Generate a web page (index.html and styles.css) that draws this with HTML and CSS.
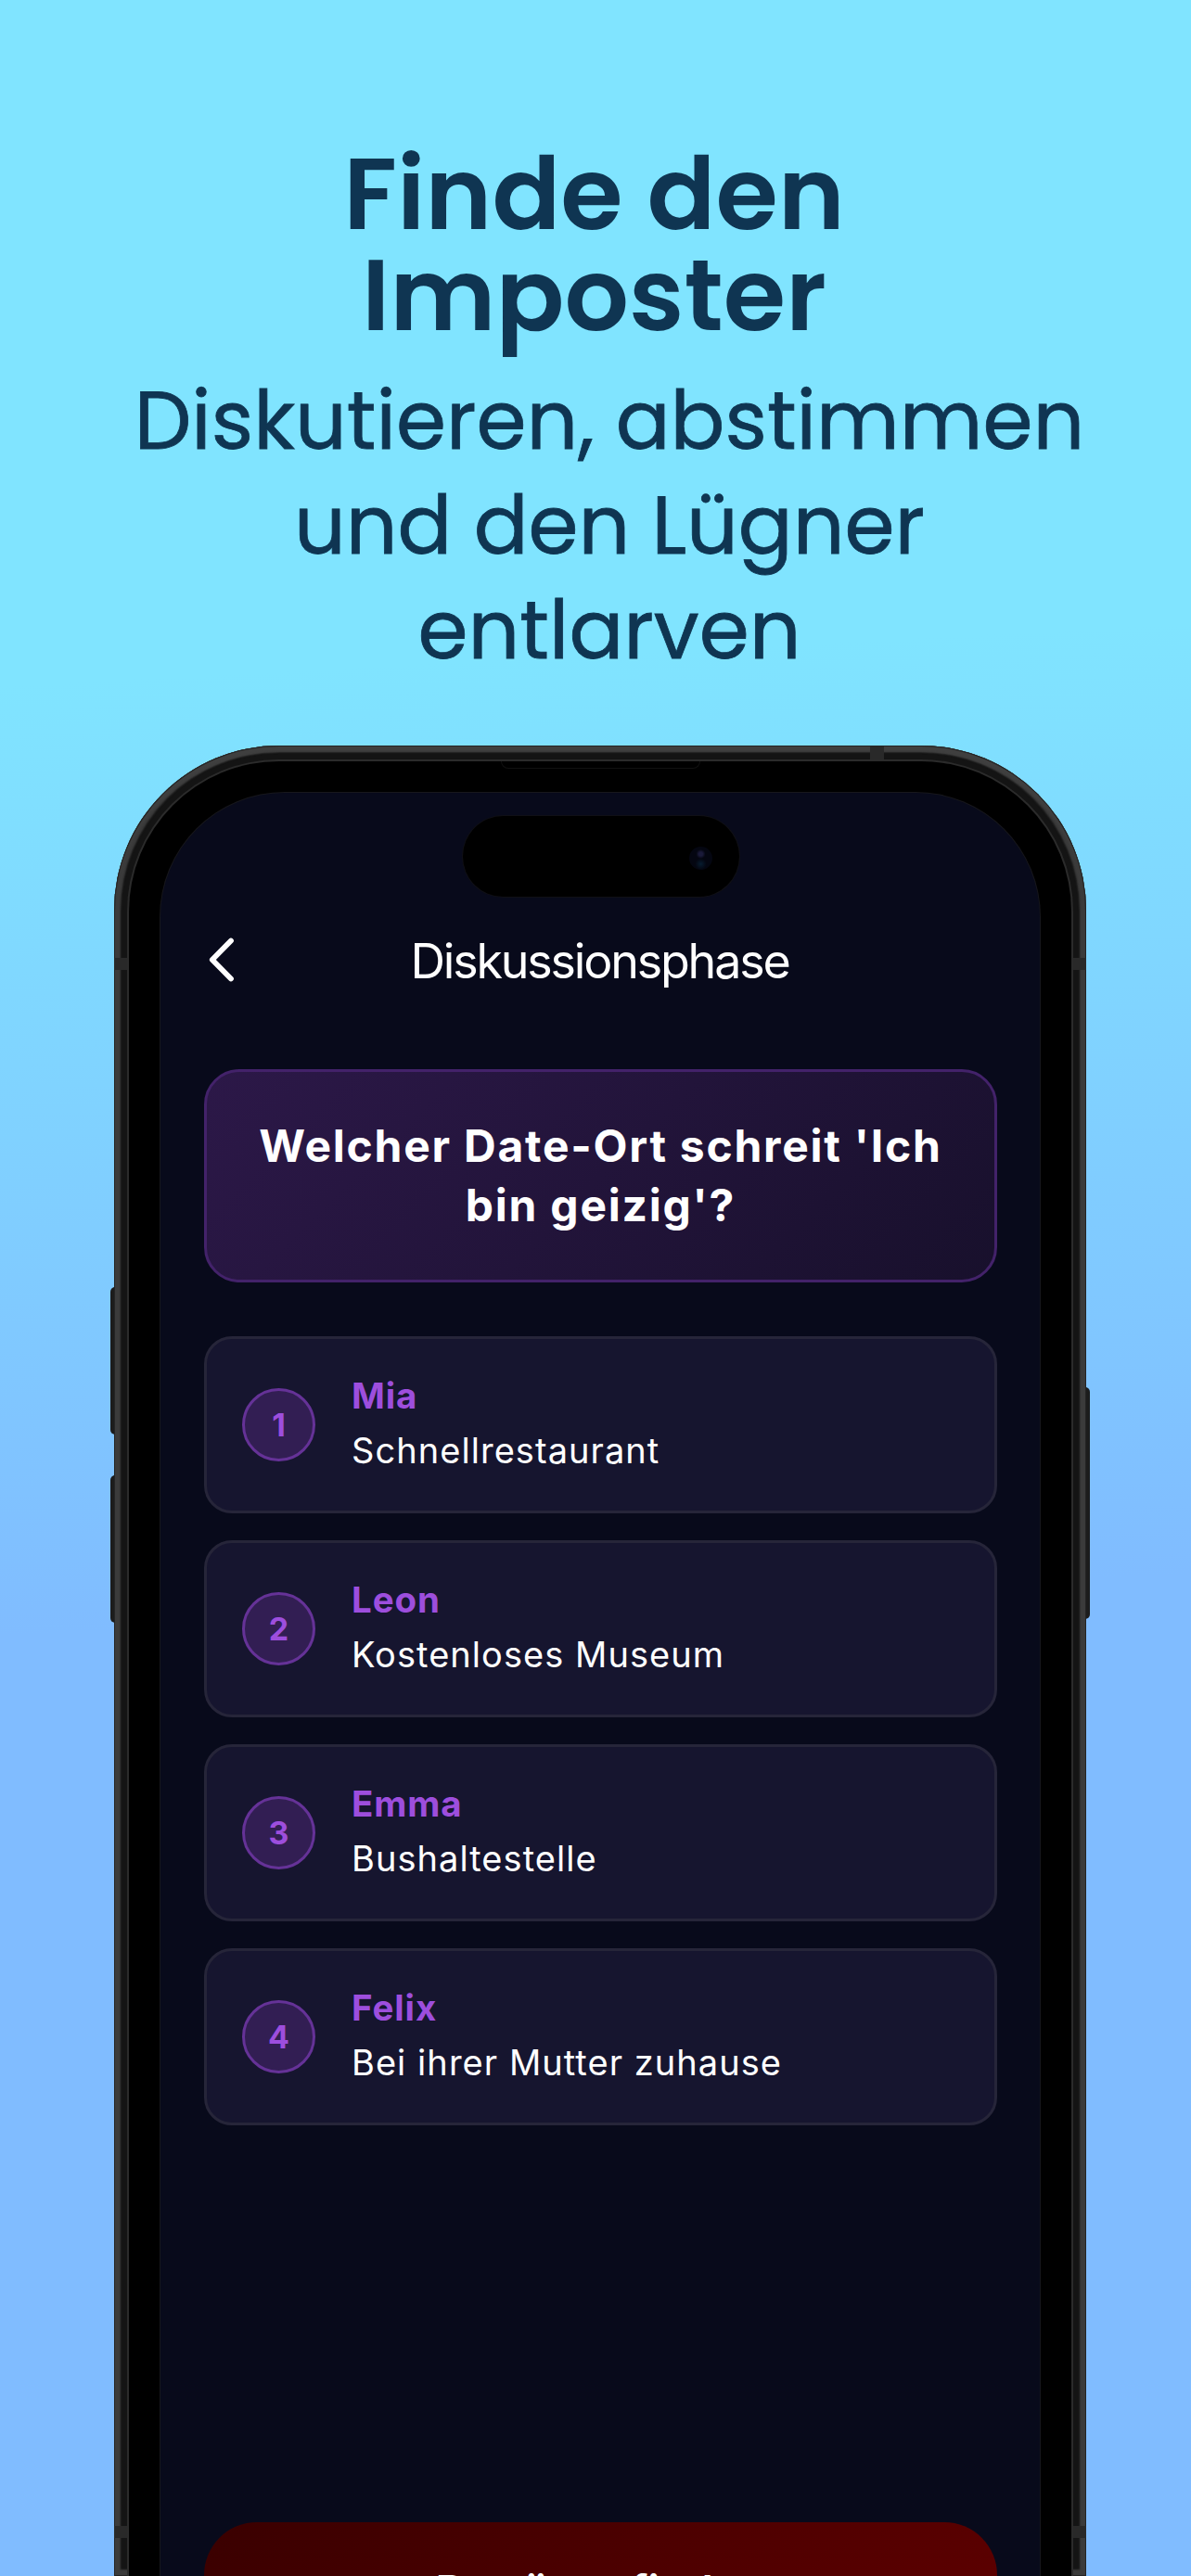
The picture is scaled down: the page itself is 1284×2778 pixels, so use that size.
FILE: index.html
```html
<!DOCTYPE html>
<html lang="de">
<head>
  <meta charset="UTF-8">
  <meta name="viewport" content="width=device-width, initial-scale=1.0">
  <title>Finde den Imposter</title>
  <link rel="stylesheet" href="styles.css">
</head>
<body>

  <header class="promo">
    <h1>
      <span>Finde den</span>
      <span>Imposter</span>
    </h1>
    <p>
      <span>Diskutieren, abstimmen</span>
      <span>und den Lügner</span>
      <span>entlarven</span>
    </p>
  </header>

  <div class="phone">
    <div class="side-button vol-up"></div>
    <div class="side-button vol-down"></div>
    <div class="side-button power"></div>
    <div class="antenna antenna-top"></div>
    <div class="antenna antenna-side"></div>
    <div class="antenna antenna-bottom"></div>

    <div class="bezel">
      <div class="speaker"></div>
      <div class="screen">
        <div class="island"><div class="camera"></div></div>

        <div class="topbar">
          <svg class="back" width="34" height="54" viewBox="0 0 34 54">
            <path d="M29 6.5 L8.8 27 L29 47.5" fill="none" stroke="#fff" stroke-width="5.8" stroke-linecap="round" stroke-linejoin="round"/>
          </svg>
          <div class="title">Diskussionsphase</div>
        </div>

        <div class="question">
          <span>Welcher Date-Ort schreit 'Ich</span>
          <span>bin geizig'?</span>
        </div>

        <div class="answers">
          <div class="answer">
            <div class="number">1</div>
            <div>
              <div class="name">Mia</div>
              <div class="text">Schnellrestaurant</div>
            </div>
          </div>
          <div class="answer">
            <div class="number">2</div>
            <div>
              <div class="name">Leon</div>
              <div class="text">Kostenloses Museum</div>
            </div>
          </div>
          <div class="answer">
            <div class="number">3</div>
            <div>
              <div class="name">Emma</div>
              <div class="text">Bushaltestelle</div>
            </div>
          </div>
          <div class="answer">
            <div class="number">4</div>
            <div>
              <div class="name">Felix</div>
              <div class="text">Bei ihrer Mutter zuhause</div>
            </div>
          </div>
        </div>

        <button class="vote">Betrüger finden</button>
      </div>
    </div>
  </div>

</body>
</html>
```

FILE: styles.css
```css
* {
  box-sizing: border-box;
}
body {
  margin: 0;
  width: 1284px;
  height: 2778px;
  overflow: hidden;
  font-family: Inter, sans-serif;
  background: linear-gradient(177deg, #80e4ff 0%, #80e4ff 26%, #80bcff 62%, #80bcff 100%);
}
.promo {
  height: 804px;
  padding-top: 155px;
  color: #0f3552;
  text-align: center;
  font-family: Poppins, Inter, sans-serif;
}
.promo span {
  display: block;
  white-space: nowrap;
}
h1 {
  margin: 0;
  padding-right: 3px;
  font-size: 109px;
  font-weight: 600;
  line-height: 109px;
}
.promo p {
  margin: 24px 0 0;
  padding-left: 30px;
  font-size: 87.1px;
  line-height: 113px;
  -webkit-text-stroke: 0.8px #0f3552;
}

/* phone */
.phone {
  position: relative;
  width: 1048px;
  height: 1974px;
  margin-left: 123px;
  padding: 17px 16px 0;
  border-radius: 178px 178px 0 0;
  background: #141414;
  box-shadow: inset 0 0 0 1px #242424, inset 0 8px 2px -1px #3f3f3f, inset 0 0 2px 7px #3b3b3b;
}
.side-button {
  position: absolute;
  z-index: -1;
  width: 10px;
  border-radius: 5px;
  background: #1c1c1c;
}
.vol-up {
  left: -4px;
  top: 584px;
  height: 159px;
}
.vol-down {
  left: -4px;
  top: 787px;
  height: 159px;
}
.power {
  right: -4px;
  top: 692px;
  height: 250px;
}
.antenna {
  position: absolute;
  background: #292929;
}
.antenna-top {
  left: 815px;
  top: 1px;
  width: 15px;
  height: 14px;
}
.antenna-side,
.antenna-bottom {
  left: 0;
  width: 1048px;
  height: 13px;
}
.antenna-side {
  top: 229px;
}
.antenna-bottom {
  top: 1920px;
}
.bezel {
  position: relative;
  height: 1957px;
  padding: 34px 34px 0;
  border-radius: 162px 162px 0 0;
  background: #000;
  box-shadow: 0 0 0 2px #2b2b2b;
}
.speaker {
  position: absolute;
  left: 401px;
  top: 0;
  width: 215px;
  height: 8px;
  border: 1px solid #111;
  border-top: 0;
  border-radius: 0 0 8px 8px;
}
.screen {
  height: 1923px;
  padding: 25px 46px 0 47px;
  border-radius: 134px 134px 0 0;
  overflow: hidden;
  background: #080a1b;
  box-shadow: 0 0 0 1px #17171c;
}
.island {
  display: flex;
  align-items: center;
  justify-content: flex-end;
  width: 298px;
  height: 87px;
  margin: 0 auto;
  padding-right: 29px;
  border-radius: 45px;
  background: #000;
  box-shadow: 0 0 0 1px #101016;
}
.camera {
  width: 25px;
  height: 25px;
  margin-top: 4px;
  border-radius: 50%;
  background: radial-gradient(circle at 50% 32%, #1a1a3a 0, #1a1a3a 2px, transparent 5px), radial-gradient(circle at 50% 75%, #071c30 0, transparent 6px), #040611;
}
.topbar {
  display: flex;
  align-items: center;
  height: 80px;
  margin-top: 28px;
}
.back {
  margin-right: -34px;
}
.title {
  flex: 1;
  padding: 2px 2px 0 0;
  color: #fff;
  font-size: 52px;
  letter-spacing: -2.2px;
  text-align: center;
}
.question {
  display: flex;
  flex-direction: column;
  align-items: center;
  justify-content: center;
  height: 230px;
  margin-top: 78px;
  border: 3px solid #43226a;
  border-radius: 38px;
  background: linear-gradient(135deg, #2c1848, #18102c);
  color: #fff;
  font-size: 48px;
  font-weight: 700;
  line-height: 64px;
  letter-spacing: 1.75px;
  white-space: nowrap;
}
.answers {
  display: flex;
  flex-direction: column;
  gap: 29px;
  margin-top: 58px;
}
.answer {
  display: flex;
  align-items: center;
  gap: 39px;
  height: 191px;
  padding-left: 38px;
  border: 3px solid #262539;
  border-radius: 30px;
  background: #16152f;
}
.number {
  width: 79px;
  height: 79px;
  border: 3px solid #653297;
  border-radius: 50%;
  background: #321e53;
  color: #9d4edd;
  font-size: 34px;
  font-weight: 700;
  line-height: 74px;
  text-align: center;
}
.name {
  color: #9d4edd;
  font-size: 38.5px;
  font-weight: 700;
  line-height: 59px;
  letter-spacing: 0.9px;
}
.text {
  margin-bottom: 4px;
  color: #fff;
  font-size: 38px;
  line-height: 58px;
  letter-spacing: 1.05px;
}
.vote {
  display: block;
  width: 100%;
  height: 147px;
  margin-top: 428px;
  border: 0;
  border-radius: 57px;
  background: linear-gradient(135deg, #3a0000, #5e0000);
  color: #fff;
  font-family: inherit;
  font-size: 47px;
  font-weight: 600;
}
```
